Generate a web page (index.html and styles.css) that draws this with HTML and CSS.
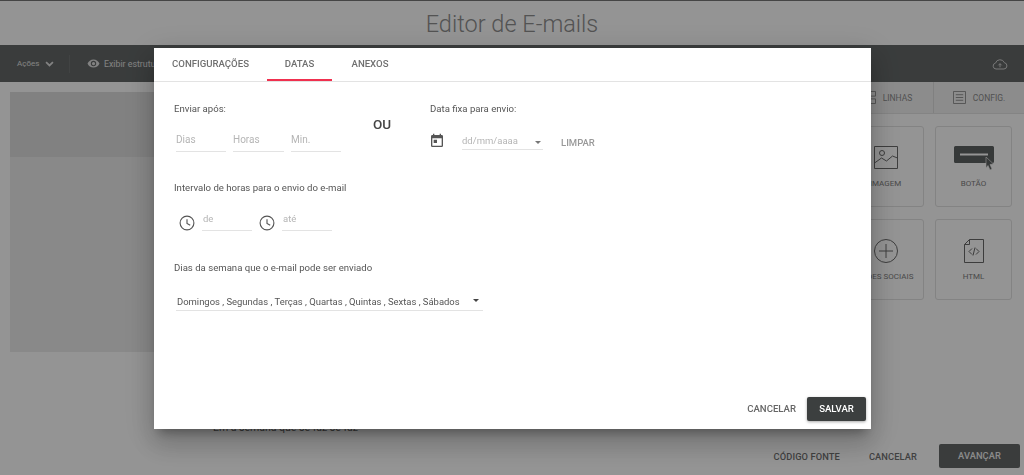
FILE: index.html
```html
<!DOCTYPE html>
<html lang="pt-BR">
<head>
<meta charset="utf-8">
<title>Editor de E-mails</title>
<link rel="stylesheet" href="styles.css">
</head>
<body>
<div class="page">
  <h1 class="title">Editor de E-mails</h1>
  <div class="toolbar">
    <span class="tool tool-actions">Ações</span>
    <svg class="chev" viewBox="0 0 10 7"><path d="M1 1.200 5 5.200 9 1.200" fill="none" stroke="currentColor" stroke-width="2"/></svg>
    <span class="tool-div"></span>
    <svg class="eye" viewBox="0 0 24 24"><path fill="currentColor" d="M12 4.500C7 4.500 2.700 7.600 1 12c1.700 4.400 6 7.500 11 7.500s9.300-3.100 11-7.500c-1.700-4.400-6-7.500-11-7.500zM12 17a5 5 0 1 1 0-10 5 5 0 0 1 0 10zm0-8a3 3 0 1 0 0 6 3 3 0 0 0 0-6z"/></svg>
    <span class="tool">Exibir estrutura</span>
    <svg class="cloud" viewBox="0 0 24 18"><path fill="none" stroke="currentColor" stroke-width="1.500" d="M6 16.500a4.500 4.500 0 0 1-.7-8.900A7 7 0 0 1 18.500 7a4.800 4.800 0 0 1-.5 9.500zM12 14V8.500M9.500 11 12 8.500l2.500 2.500"/></svg>
  </div>
  <div class="workspace">
    <div class="canvas">
      <div class="canvas-panel">
        <div class="canvas-head"></div>
      </div>
      <p class="canvas-text">Em a semana que se faz se faz</p>
    </div>
    <aside class="sidebar">
      <div class="side-tabs">
        <div class="side-tab">
          <svg class="side-icon" viewBox="0 0 14 14"><path fill="none" stroke="currentColor" d="M.5.500h13v5H.5zM.5 8.500h13v5H.5z"/></svg>
          LINHAS
        </div>
        <div class="side-tab side-tab-last">
          <svg class="side-icon" viewBox="0 0 14 14"><path fill="none" stroke="currentColor" d="M.5.500h13v13H.5zM3 4h8M3 7h8M3 10h8"/></svg>
          CONFIG.
        </div>
      </div>
      <div class="cards">
        <div class="card">
          <svg class="card-icon" viewBox="0 0 24 24"><path fill="none" stroke="currentColor" stroke-width="1" d="M.5 .5h23v22H.5zM.5 17l7-5 5 3 6-5 5 2"/><circle cx="8" cy="7" r="2.500" fill="none" stroke="currentColor"/></svg>
          <span class="card-label">IMAGEM</span>
        </div>
        <div class="card">
          <svg class="card-button" viewBox="0 0 40 26"><path class="btn-fill" d="M0 1.500A1.500 1.500 0 0 1 1.500 0h37A1.500 1.500 0 0 1 40 1.500v14a1.500 1.500 0 0 1-1.500 1.500h-37A1.500 1.500 0 0 1 0 15.500z"/><path fill="#fff" d="M6 7.500h28v2H6z"/><path class="btn-fill" stroke="#fff" stroke-width=".6" d="m32 11 7.500 7-3.500.5 2 4.500-2 1-2-4.500-2 2.500z"/></svg>
          <span class="card-label">BOTÃO</span>
        </div>
        <div class="card">
          <svg class="card-icon" viewBox="0 0 24 24"><circle cx="12" cy="12" r="11.500" fill="none" stroke="currentColor"/><path fill="none" stroke="currentColor" d="M12 5v14M5 12h14"/></svg>
          <span class="card-label">REDES SOCIAIS</span>
        </div>
        <div class="card">
          <svg class="card-icon" viewBox="0 0 20 24"><path fill="none" stroke="currentColor" d="M5.500.5h14v23H.5V5.500zM5.500.5v5h-5M8 9.500l-3 3 3 3M12 9.500l3 3-3 3M11 8.500 9 16.500"/></svg>
          <span class="card-label">HTML</span>
        </div>
      </div>
    </aside>
  </div>
  <div class="footer">
    <span class="foot-link">CÓDIGO FONTE</span>
    <span class="foot-link">CANCELAR</span>
    <span class="foot-btn">AVANÇAR</span>
  </div>
</div>

<div class="overlay"></div>

<div class="dialog">
  <div class="tabs">
    <span class="tab tab-one">CONFIGURAÇÕES</span>
    <span class="tab tab-active">DATAS</span>
    <span class="tab tab-three">ANEXOS</span>
  </div>
  <div class="dialog-body">
    <div class="row-top">
      <div class="send-after">
        <div class="label">Enviar após:</div>
        <div class="inputs">
          <span class="field field-w50">Dias</span>
          <span class="field field-w51">Horas</span>
          <span class="field field-w50">Min.</span>
        </div>
      </div>
      <div class="or">OU</div>
      <div class="fixed-date">
        <div class="label">Data fixa para envio:</div>
        <div class="date-row">
          <svg class="cal" viewBox="0 0 24 24"><path fill="currentColor" d="M19 3h-1V1h-2v2H8V1H6v2H5a2 2 0 0 0-2 2v14a2 2 0 0 0 2 2h14a2 2 0 0 0 2-2V5a2 2 0 0 0-2-2zm0 16H5V8h14zM7 10h5v5H7z"/></svg>
          <span class="date-field">dd/mm/aaaa<i class="date-caret"></i></span>
          <span class="clear">LIMPAR</span>
        </div>
      </div>
    </div>
    <div class="label label-hours">Intervalo de horas para o envio do e-mail</div>
    <div class="hours">
      <svg class="clock" viewBox="0 0 24 24"><circle cx="12" cy="12" r="9.200" fill="none" stroke="currentColor" stroke-width="1.500"/><path fill="none" stroke="currentColor" stroke-width="1.500" d="M12 7v5.500l4.300 2.600"/></svg>
      <span class="field field-w50 field-time">de</span>
      <svg class="clock" viewBox="0 0 24 24"><circle cx="12" cy="12" r="9.200" fill="none" stroke="currentColor" stroke-width="1.500"/><path fill="none" stroke="currentColor" stroke-width="1.500" d="M12 7v5.500l4.300 2.600"/></svg>
      <span class="field field-w50 field-time">até</span>
    </div>
    <div class="label label-days">Dias da semana que o e-mail pode ser enviado</div>
    <div class="days">Domingos , Segundas , Terças , Quartas , Quintas , Sextas , Sábados<i class="days-caret"></i></div>
  </div>
  <div class="actions">
    <span class="act-link">CANCELAR</span>
    <span class="act-btn">SALVAR</span>
  </div>
</div>
</body>
</html>
```
FILE: styles.css
```css
* { box-sizing: border-box; }
html, body { margin: 0; height: 100%; overflow: hidden; }
body { font-family: Roboto, "Liberation Sans", sans-serif; color: #333; background: #fff; }

.page { height: 475px; display: flex; flex-direction: column; border-top: 1px solid #777; }
.title { margin: 0; height: 44px; font-size: 23.500px; font-weight: 300; line-height: 46px; text-align: center; color: #8f8f8f; }

.toolbar { height: 37px; flex: none; display: flex; align-items: center; padding-left: 17px; background: #646868; color: #e0e0e0; font-size: 8.800px; }
.tool-actions { width: 22px; font-size: 8px; white-space: nowrap; }
.chev { width: 9px; height: 6px; margin-left: 6px; }
.tool-div { width: 1px; height: 18px; margin: 0 17px 0 15px; background: #707474; }
.eye { width: 13px; height: 13px; margin-right: 4px; }
.cloud { width: 16px; height: 12px; margin-left: auto; margin-right: 16px; color: #d0d0d0; }

.workspace { flex: 1; min-height: 0; display: flex; }
.canvas { flex: 1; padding: 10px 0 0 10px; min-width: 0; }
.canvas-panel { height: 260px; background: #ececec; }
.canvas-head { height: 65px; background: #dfdfdf; }
.canvas-text { margin: 69px 0 0 203px; font-size: 10.500px; line-height: 14px; color: #666; white-space: nowrap; }

.sidebar { width: 182px; flex: none; }
.side-tabs { height: 32px; display: flex; background: #f2f2f2; border-bottom: 1px solid #e4e4e4; }
.side-tab { flex: 1; display: flex; align-items: center; justify-content: center; gap: 7px; font-size: 8.500px; color: #8c8c8c; }
.side-tab-last { flex: none; width: 91px; border-left: 1px solid #dcdcdc; }
.side-icon { width: 13px; height: 13px; }
.cards { display: grid; grid-template-columns: 77px 77px; grid-auto-rows: 81px; gap: 12px 11px; padding: 12px 0 0 5px; }
.card { display: flex; flex-direction: column; align-items: center; border: 1px solid #e2e2e2; border-radius: 3px; color: #6a6a6a; padding-top: 19px; }
.card-icon { width: 24px; height: 24px; }
.card-button { width: 40px; height: 26px; margin-bottom: -2px; }
.btn-fill { fill: #5e6262; }
.card-label { margin-top: 8px; font-size: 8px; line-height: 12px; color: #7e7e7e; white-space: nowrap; }

.footer { height: 38px; flex: none; display: flex; align-items: center; justify-content: flex-end; padding: 0 4px 0 0; font-size: 9.300px; font-weight: 500; color: #707070; letter-spacing: .1px; }
.foot-link { margin-right: 29px; }
.foot-btn { width: 81px; height: 24px; line-height: 24px; margin-left: -7px; text-align: center; background: #646868; color: #f0f0f0; border-radius: 2px; }

.overlay { position: fixed; inset: 0; background: rgba(0,0,0,.42); }

.dialog { position: fixed; left: 154px; top: 48px; width: 717px; height: 381px; display: flex; flex-direction: column; background: #fff; box-shadow: 0 8px 10px -5px rgba(0,0,0,.3), 0 16px 24px 2px rgba(0,0,0,.14), 0 6px 30px 5px rgba(0,0,0,.12); color: #555; }
.tabs { height: 34px; flex: none; display: flex; border-bottom: 1px solid #e3e3e3; font-size: 9.600px; font-weight: 500; color: #707070; }
.tab { height: 33px; line-height: 32px; text-align: center; }
.tab-one { width: 113px; }
.tab-active { width: 65px; border-bottom: 2px solid #f0304f; }
.tab-three { width: 76px; }

.dialog-body { flex: 1; padding: 0 0 0 20px; }
.label { font-size: 9.600px; line-height: 12px; color: #555; }
.row-top { display: flex; height: 71px; }
.send-after { padding-top: 21px; width: 188px; }
.inputs { display: flex; gap: 7px; margin: 17px 0 0 2px; }
.field { display: block; height: 20px; border-bottom: 1px solid #e3e3e3; font-size: 10px; line-height: 16px; color: #b5b5b5; }
.field-w50 { width: 50px; }
.field-w51 { width: 51px; }
.or { width: 68px; padding: 35px 0 0 11px; font-size: 13.500px; line-height: 14px; font-weight: 500; color: #444; }
.fixed-date { padding-top: 21px; }
.date-row { display: flex; align-items: center; margin-top: 14px; }
.cal { width: 16px; height: 16px; margin: 2px 0 0 -1px; color: #555; }
.date-field { position: relative; width: 81px; height: 21px; margin-left: 17px; border-bottom: 1px solid #e3e3e3; font-size: 9.500px; line-height: 24px; color: #b5b5b5; }
.date-caret { position: absolute; right: 2px; top: 12px; border: 3.500px solid transparent; border-top-color: #777; border-bottom: 0; }
.clear { margin: 6px 0 0 18px; font-size: 9.500px; font-weight: 500; color: #999; }

.label-hours { margin-top: 29px; }
.hours { display: flex; align-items: flex-start; height: 24px; margin: 13px 0 0 4px; }
.clock { width: 18px; height: 18px; color: #555; margin-top: 7px; }
.field-time { height: 24px; margin: 0 6px; padding-left: 1px; font-size: 9.500px; line-height: 24px; }
.label-days { margin-top: 31px; }
.days { position: relative; width: 307px; height: 23px; margin: 14px 0 0 2px; border-bottom: 1px solid #e3e3e3; padding-left: 1px; font-size: 9.450px; line-height: 27px; color: #555; white-space: nowrap; }
.days-caret { position: absolute; right: 4px; top: 11px; border: 3.500px solid transparent; border-top-color: #444; border-bottom: 0; }

.actions { height: 36px; flex: none; display: flex; align-items: center; justify-content: flex-end; padding: 0 5px 5px 0; font-size: 9.600px; font-weight: 500; }
.act-link { margin-right: 11px; color: #666; }
.act-btn { width: 59px; height: 24px; line-height: 24px; text-align: center; background: #3c3f3f; color: #fff; border-radius: 2px; box-shadow: 0 1px 3px rgba(0,0,0,.35); }
```
